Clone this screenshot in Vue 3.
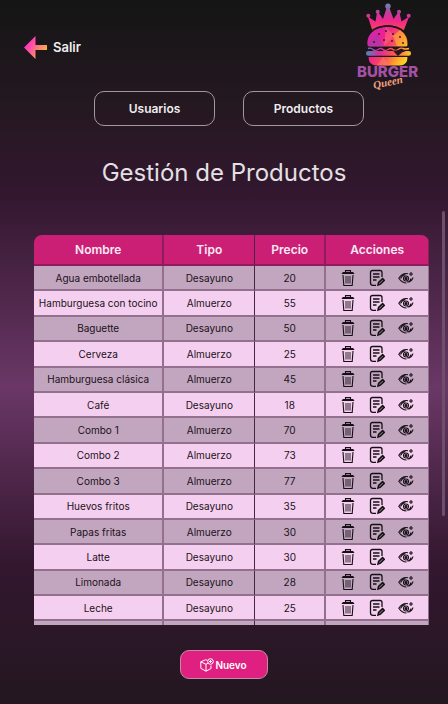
<script setup>
import { ref } from 'vue'

const products = ref([
  { name: 'Agua embotellada', type: 'Desayuno', price: 20 },
  { name: 'Hamburguesa con tocino', type: 'Almuerzo', price: 55 },
  { name: 'Baguette', type: 'Desayuno', price: 50 },
  { name: 'Cerveza', type: 'Almuerzo', price: 25 },
  { name: 'Hamburguesa clásica', type: 'Almuerzo', price: 45 },
  { name: 'Café', type: 'Desayuno', price: 18 },
  { name: 'Combo 1', type: 'Almuerzo', price: 70 },
  { name: 'Combo 2', type: 'Almuerzo', price: 73 },
  { name: 'Combo 3', type: 'Almuerzo', price: 77 },
  { name: 'Huevos fritos', type: 'Desayuno', price: 35 },
  { name: 'Papas fritas', type: 'Almuerzo', price: 30 },
  { name: 'Latte', type: 'Desayuno', price: 30 },
  { name: 'Limonada', type: 'Desayuno', price: 28 },
  { name: 'Leche', type: 'Desayuno', price: 25 },
  { name: '', type: '', price: '' },
])
</script>

<template>
  <div class="page">
    <header class="top">
      <a class="exit" href="#">
        <svg class="exit-icon" viewBox="0 0 23 23" aria-hidden="true">
          <defs>
            <linearGradient id="arrow" x1="0" y1="0.2" x2="1" y2="0.8">
              <stop offset="0.15" stop-color="#ff2fc8" />
              <stop offset="0.9" stop-color="#f9b340" />
            </linearGradient>
          </defs>
          <path d="M0 11.5 11.5 0v9H23v5H11.5v9Z" fill="url(#arrow)" />
        </svg>
        <span>Salir</span>
      </a>
      <svg class="logo" viewBox="0 0 64 88" role="img" aria-label="Burger Queen">
        <defs>
          <linearGradient id="burger" x1="9" y1="30" x2="54" y2="58" gradientUnits="userSpaceOnUse">
            <stop offset="0" stop-color="#c32bb4" />
            <stop offset="0.3" stop-color="#f01f93" />
            <stop offset="0.55" stop-color="#fb4d5b" />
            <stop offset="0.75" stop-color="#ffa02c" />
            <stop offset="1" stop-color="#ffee20" />
          </linearGradient>
          <linearGradient id="crown" x1="0" y1="0" x2="0" y2="26" gradientUnits="userSpaceOnUse">
            <stop offset="0" stop-color="#5595b5" />
            <stop offset="0.3" stop-color="#b0479f" />
            <stop offset="0.65" stop-color="#ef2590" />
            <stop offset="1" stop-color="#f6455f" />
          </linearGradient>
          <linearGradient id="patty" x1="9" y1="0" x2="54" y2="0" gradientUnits="userSpaceOnUse">
            <stop offset="0" stop-color="#4d87ba" />
            <stop offset="0.3" stop-color="#d92c9d" />
            <stop offset="0.6" stop-color="#fb554e" />
            <stop offset="1" stop-color="#ffc52a" />
          </linearGradient>
        </defs>
        <g fill="url(#crown)">
          <circle cx="31" cy="3.200" r="2.700" />
          <circle cx="20.700" cy="8.700" r="2" />
          <circle cx="42" cy="8.700" r="2" />
          <circle cx="11.300" cy="12.700" r="2" />
          <circle cx="51.700" cy="12.700" r="2" />
          <path d="M15.500 28 10.800 13.500 18.500 18.500 20 9.500h1.500L26 16 29.700 4.500h2.600l4.200 11.500L41 9.500h1.500L44.500 18.500l7.700-5L46.500 28Q31 16 15.500 28Z" />
        </g>
        <path d="M10.500 42C9.500 31 18 24 30.500 24S51.500 31 50.500 42Q50.500 43.500 48.500 43.500H12.500Q10.500 43.500 10.500 42Z" fill="url(#burger)" />
        <path d="M11 42 20 31l7 12.500H13Z" fill="#8d43b3" opacity=".5" />
        <path d="M29 24 37 33 27 43Z" fill="#ff6f79" opacity=".5" />
        <path d="M43 27Q51 33 50 43H40L36 33Z" fill="#ffc32b" opacity=".55" />
        <path d="M13 29Q20 23 30.500 23T48 29" fill="none" stroke="#201618" stroke-width="1.400" />
        <g fill="#2a1720">
          <circle cx="22" cy="31" r=".9" /><circle cx="29" cy="28" r=".9" />
          <circle cx="36" cy="31" r=".9" /><circle cx="27" cy="37" r=".9" />
          <circle cx="17" cy="39" r=".9" /><circle cx="35" cy="38" r=".9" />
          <circle cx="43" cy="34" r=".9" /><circle cx="46" cy="40" r=".9" />
        </g>
        <path d="M11 45.500q3-1 5 1t5 0 5 0 5 0 5 0 5 0 5-1 6 0" fill="none" stroke="url(#patty)" stroke-width="1.400" />
        <rect x="9" y="48" width="45" height="4.700" rx="2.300" fill="url(#patty)" />
        <path d="M36 47.500h14l-5 2-4 3.500-3-3Z" fill="#2a1720" />
        <path d="M11.500 54h39q0 8.500-8 8.500H20q-8.500 0-8.500-8.500Z" fill="url(#burger)" />
        <path d="M20 62.500 26 54l7 8.500Z" fill="#ff7868" opacity=".6" />
        <text class="logo-name" x="0" y="74">BURGER</text>
        <text class="logo-script" x="17" y="86" transform="rotate(-12 17 86)">Queen</text>
      </svg>
    </header>

    <nav class="tabs">
      <button type="button">Usuarios</button>
      <button type="button">Productos</button>
    </nav>

    <h1>Gestión de Productos</h1>

    <main>
      <div class="table-wrap">
        <table>
          <colgroup>
            <col class="c-name" /><col class="c-type" /><col class="c-price" /><col />
          </colgroup>
          <thead>
            <tr><th>Nombre</th><th>Tipo</th><th>Precio</th><th>Acciones</th></tr>
          </thead>
          <tbody>
            <tr v-for="(p, i) in products" :key="i">
              <td>{{ p.name }}</td>
              <td>{{ p.type }}</td>
              <td>{{ p.price }}</td>
              <td>
                <div v-if="p.name" class="actions">
                  <button type="button" aria-label="Eliminar">
                    <svg viewBox="0 0 16 18">
                      <path d="M1.800 4.500h12.400M5.500 4V1.600h5V4M3 6l.8 10.500h8.400L13 6M2.500 3.500h11" />
                      <path d="M6 7v7.500M8 7v7.500M10 7v7.500" stroke-width=".9" />
                    </svg>
                  </button>
                  <button type="button" aria-label="Editar">
                    <svg viewBox="0 0 16 18">
                      <path d="M7 16.300H4Q1.500 16.300 1.500 14V3.500Q1.500 1.500 3.500 1.500h7.500q2 0 2 2V8M4 5h6.500M4 8h6.500M4 11h3.500" stroke-width="1.300" />
                      <path d="m9 16 .6-2.600 4-3.800 1.700 1.800-3.900 3.800Z" fill="#777" stroke-width="1.500" />
                    </svg>
                  </button>
                  <button type="button" aria-label="Ver">
                    <svg viewBox="0 0 16 18">
                      <path d="M10 4.800Q4.500 3.500.8 9.300 4 14 8.500 14M2.500 9.500Q4 6 7.500 5.500M15 8.500q-.8 3.500-4.500 4.800M13 9.500q-.5 3-4 3.500" />
                      <circle cx="8" cy="9.500" r="2.500" />
                      <circle cx="8" cy="9.500" r="1" fill="#161016" />
                      <path d="M13 3v4M11 5h4" />
                    </svg>
                  </button>
                </div>
              </td>
            </tr>
          </tbody>
        </table>
      </div>
      <button type="button" class="new">
        <svg viewBox="0 0 14 14" aria-hidden="true">
          <path d="M7.500 2.300 5.500 1.800.8 3.800v6.500l5.200 2.900 5-2.700V7.500M.8 3.800 6 6.300v6.900M6 6.300l2.500-1.300" />
          <circle cx="10.500" cy="3.500" r="2.800" />
          <path d="M10.500 2v3M9 3.500h3" />
        </svg>
        <span>Nuevo</span>
      </button>
    </main>
    <div class="scroll-thumb" aria-hidden="true"></div>
  </div>
</template>

<style>
body {
  background: #171216;
}
</style>

<style scoped>
.page {
  position: relative;
  box-sizing: border-box;
  min-height: 100vh;
  padding-bottom: 25px;
  background: linear-gradient(#151515 0%, #231820 14%, #33172f 28%, #6a3766 55%, #33172f 80%, #231720 100%);
  color: #eee;
  font-family: Inter, "Noto Sans", sans-serif;
}
button {
  font: inherit;
  color: inherit;
  cursor: pointer;
}
.top {
  display: flex;
  justify-content: space-between;
  align-items: center;
  padding: 3px 27px 0 24px;
}
.exit {
  display: flex;
  align-items: center;
  gap: 6px;
  color: #eee;
  font-size: 13px;
  font-weight: 600;
  text-decoration: none;
}
.exit-icon {
  width: 23px;
  height: 23px;
}
.logo {
  width: 64px;
  height: 88px;
}
.logo-name {
  font-family: Inter, sans-serif;
  font-weight: 800;
  font-size: 15px;
  fill: #a451a5;
}
.logo-script {
  font-family: "Liberation Serif", serif;
  font-style: italic;
  font-weight: 700;
  font-size: 11px;
  fill: #f3a080;
}
.tabs {
  display: flex;
  justify-content: center;
  gap: 28px;
  padding: 0 20px 0 30px;
}
.tabs button {
  width: 121px;
  height: 35px;
  border: 1px solid #a297a1;
  border-radius: 10px;
  background: transparent;
  font-size: 12px;
  font-weight: 600;
}
main {
  display: flex;
  flex-direction: column;
  align-items: center;
  padding: 0 19px 0 34px;
}
h1 {
  margin: 31px 0 47px;
  font-size: 24px;
  line-height: 31px;
  font-weight: 400;
  text-align: center;
  color: #e4e0e3;
}
.table-wrap {
  width: 100%;
  height: 390px;
  overflow: hidden;
  border-radius: 8px 8px 0 0;
}
table {
  width: 100%;
  height: 412px;
  table-layout: fixed;
  border-collapse: separate;
  border-spacing: 0;
  text-align: center;
  font-size: 10px;
  color: #1b121a;
}
.c-name { width: 33%; }
.c-type { width: 23%; }
.c-price { width: 18%; }
th,
td {
  box-sizing: border-box;
  padding: 0;
  border-right: 2px solid #94708f;
  border-bottom: 2px solid #94708f;
}
td {
  height: 25px;
}
th {
  height: 31px;
  background: #cb1f76;
  border-color: #8e1d5c;
  color: #faeaf3;
  font-size: 12px;
  font-weight: 600;
}
th:nth-child(2),
td:nth-child(2) {
  border-right: 1px solid #4a2545;
}
th:last-child,
td:last-child {
  border-right-width: 1px;
}
tbody tr:nth-child(odd) { background: #c2a5bf; }
tbody tr:nth-child(even) { background: #f5cfef; }
.actions {
  display: flex;
  justify-content: center;
  gap: 13px;
}
.actions button {
  display: block;
  padding: 0;
  border: 0;
  background: none;
}
.actions svg {
  display: block;
  width: 16px;
  height: 18px;
  fill: none;
  stroke: #161016;
  stroke-width: 1.1;
}
.new {
  display: flex;
  align-items: center;
  justify-content: center;
  gap: 1px;
  width: 88px;
  height: 29px;
  margin: 25px 16px 0 0;
  padding: 0;
  border: 1px solid #c389a8;
  border-radius: 9px;
  background: #e02080;
  color: #fff;
  font-size: 10px;
  font-weight: 600;
}
.new svg {
  width: 14px;
  height: 14px;
  fill: none;
  stroke: #fff;
  stroke-width: 1;
}
.scroll-thumb {
  position: absolute;
  top: 211px;
  right: 3px;
  width: 3px;
  height: 305px;
  border-radius: 2px;
  background: #6b5069;
}
</style>
